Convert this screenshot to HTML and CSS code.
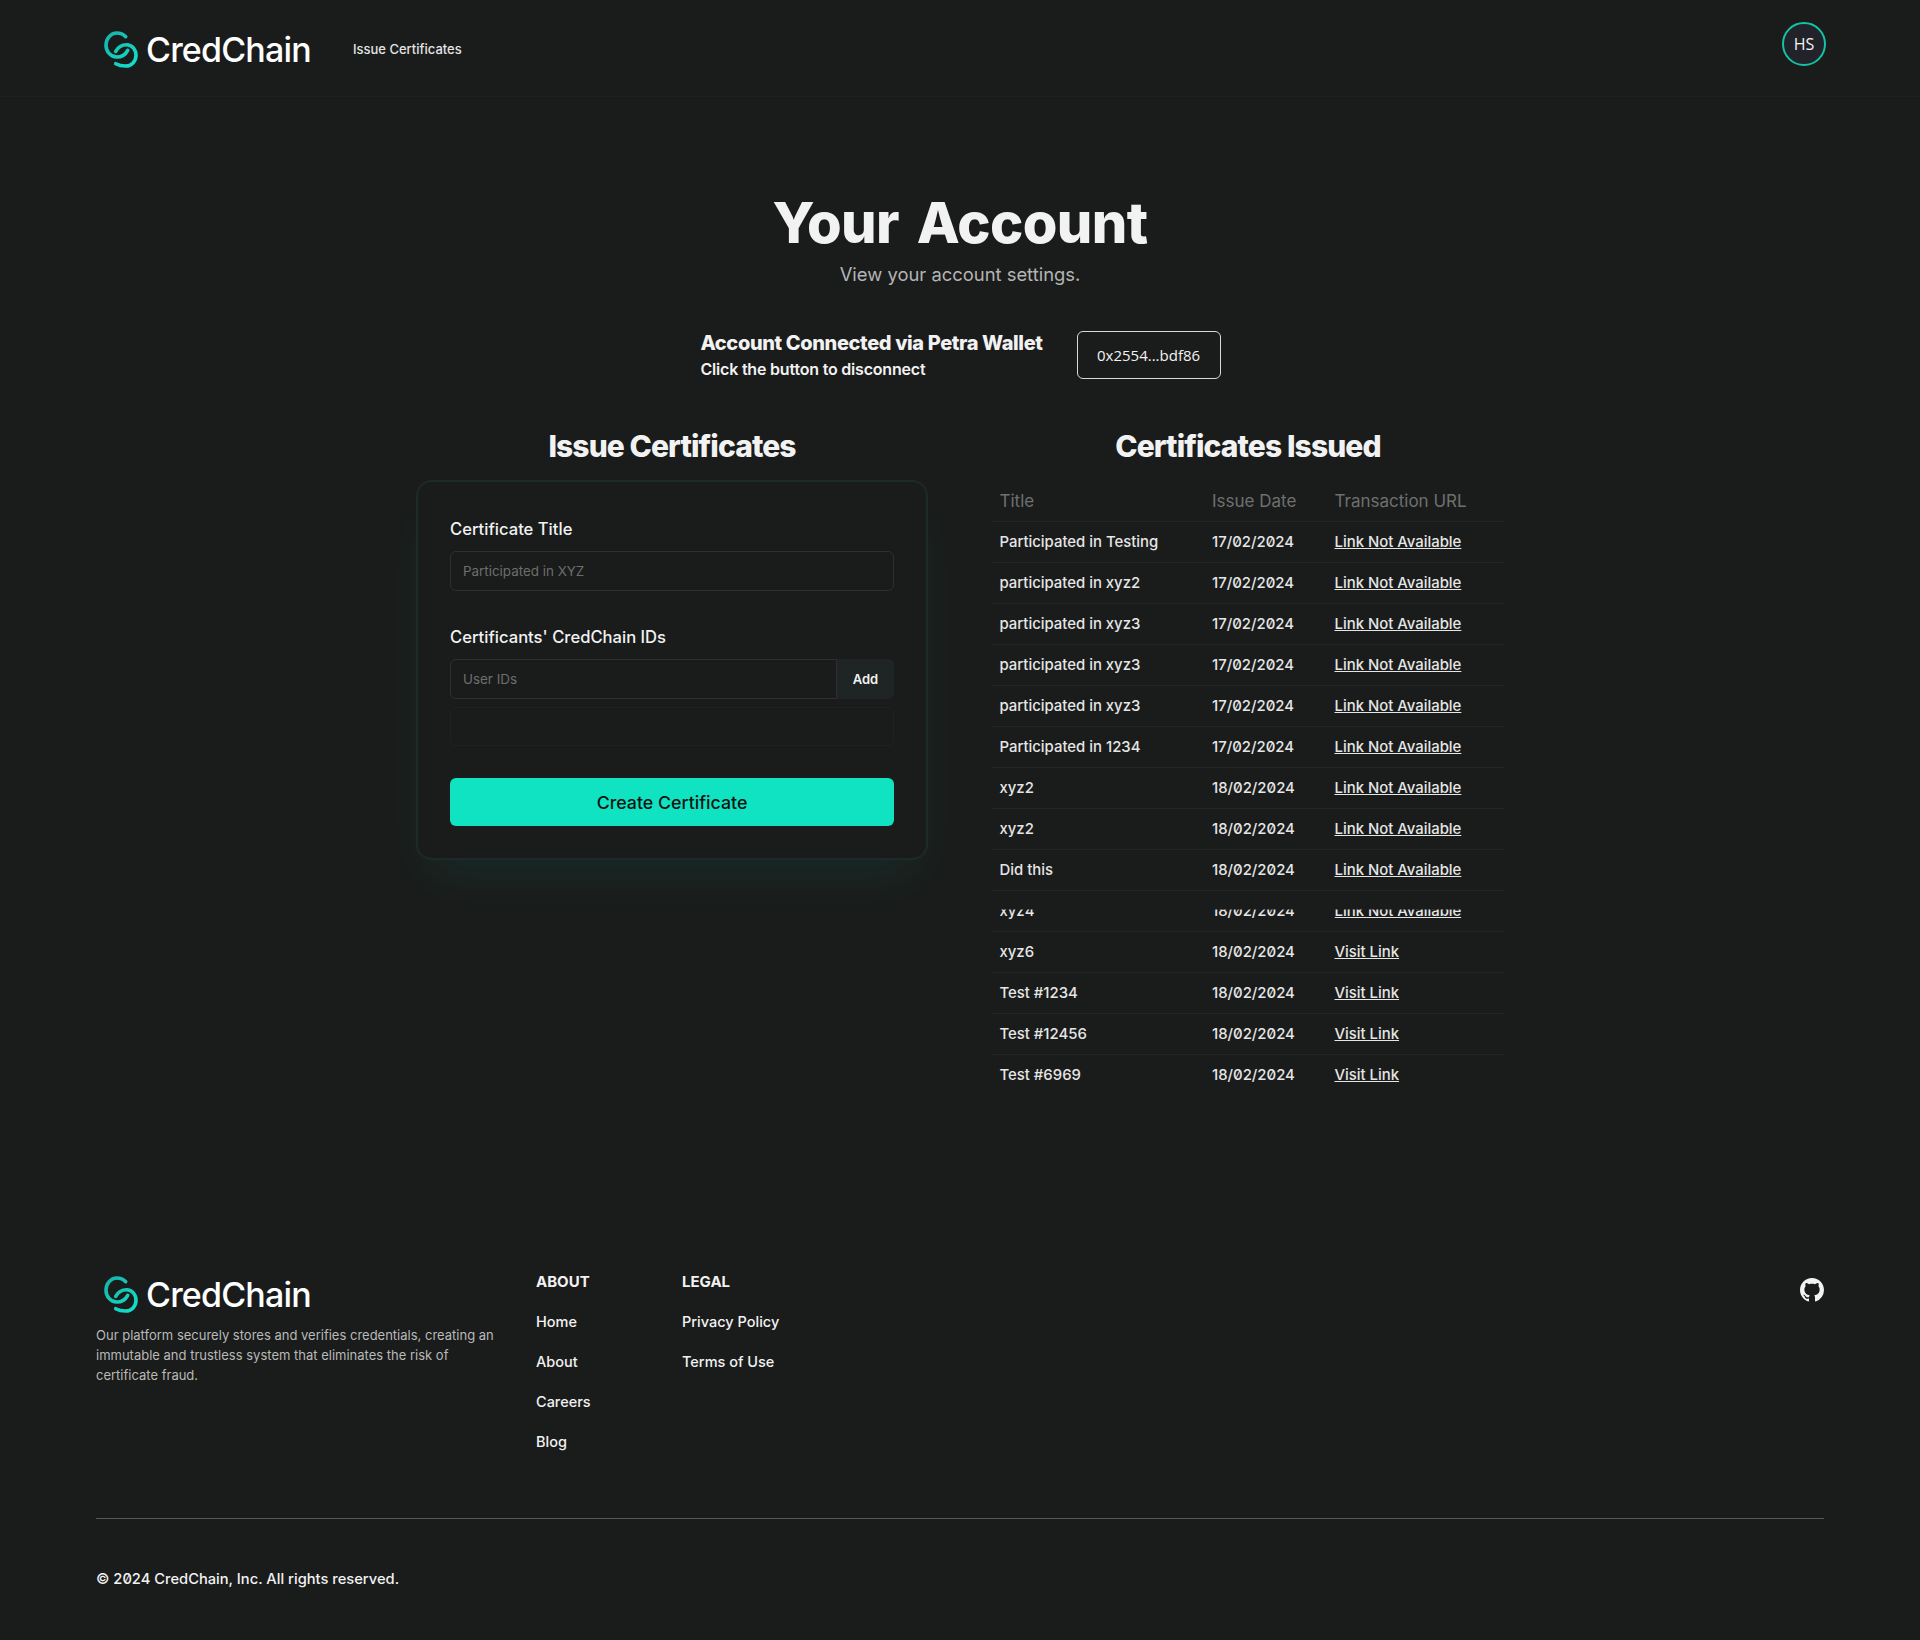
FILE: index.html
```html
<!DOCTYPE html>
<html lang="en">
<head>
    <meta charset="UTF-8" />
    <title>CredChain</title>
    <link rel="stylesheet" href="styles.css">
</head>

<body>
    <svg class="defs" width="0" height="0" aria-hidden="true">
        <defs>
            <linearGradient id="chainTeal" gradientUnits="userSpaceOnUse" x1="3" y1="4" x2="33" y2="35">
                <stop offset="0" stop-color="#17b5aa" />
                <stop offset="1" stop-color="#12dfcc" />
            </linearGradient>
            <g id="chainMark">
                <path d="M22.700 5.700C20.500 3.300 17 2 13.700 2C7.800 2 3 7.800 3 14C3 20.500 7.500 26 13.700 26C18 26 22.500 23.500 24.700 19.300" />
                <path d="M12.700 20.300C15 16 19 13.700 23.700 13.700C29 13.700 33 18.500 33 24.300C33 30.300 28.500 35 22.700 35C19 35 15.500 34.300 12.700 32.700" />
            </g>
        </defs>
    </svg>

    <header class="topbar">
        <a class="brand" href="#">
            <svg class="brand-mark" viewBox="0 0 36 38"><use href="#chainMark" /></svg>
            <span class="brand-name">CredChain</span>
        </a>
        <a class="nav-link" href="#">Issue Certificates</a>
        <button class="avatar">HS</button>
    </header>

    <main class="account">
        <h1>Your Account</h1>
        <p class="subtitle">View your account settings.</p>

        <section class="wallet">
            <div class="wallet-text">
                <h2>Account Connected via Petra Wallet</h2>
                <p>Click the button to disconnect</p>
            </div>
            <button class="wallet-btn">0x2554...bdf86</button>
        </section>

        <div class="columns">
            <section>
                <h3>Issue Certificates</h3>
                <form class="card">
                    <label for="certTitle">Certificate Title</label>
                    <input id="certTitle" type="text" placeholder="Participated in XYZ" />

                    <label class="second" for="userIds">Certificants' CredChain IDs</label>
                    <div class="id-row">
                        <input id="userIds" type="text" placeholder="User IDs" />
                        <button type="button" class="add-btn">Add</button>
                    </div>
                    <div class="id-list"></div>

                    <button type="button" class="create-btn">Create Certificate</button>
                </form>
            </section>

            <section>
                <h3>Certificates Issued</h3>
                <table class="issued">
                    <thead>
                        <tr><th>Title</th><th>Issue Date</th><th>Transaction URL</th></tr>
                    </thead>
                    <tbody>
                        <tr><td>Participated in Testing</td><td>17/02/2024</td><td><a href="#">Link Not Available</a></td></tr>
                        <tr><td>participated in xyz2</td><td>17/02/2024</td><td><a href="#">Link Not Available</a></td></tr>
                        <tr><td>participated in xyz3</td><td>17/02/2024</td><td><a href="#">Link Not Available</a></td></tr>
                        <tr><td>participated in xyz3</td><td>17/02/2024</td><td><a href="#">Link Not Available</a></td></tr>
                        <tr><td>participated in xyz3</td><td>17/02/2024</td><td><a href="#">Link Not Available</a></td></tr>
                        <tr><td>Participated in 1234</td><td>17/02/2024</td><td><a href="#">Link Not Available</a></td></tr>
                        <tr><td>xyz2</td><td>18/02/2024</td><td><a href="#">Link Not Available</a></td></tr>
                        <tr><td>xyz2</td><td>18/02/2024</td><td><a href="#">Link Not Available</a></td></tr>
                        <tr><td>Did this</td><td>18/02/2024</td><td><a href="#">Link Not Available</a></td></tr>
                        <tr class="cut"><td><span>xyz4</span></td><td><span>18/02/2024</span></td><td><span><a href="#">Link Not Available</a></span></td></tr>
                        <tr><td>xyz6</td><td>18/02/2024</td><td><a href="#">Visit Link</a></td></tr>
                        <tr><td>Test #1234</td><td>18/02/2024</td><td><a href="#">Visit Link</a></td></tr>
                        <tr><td>Test #12456</td><td>18/02/2024</td><td><a href="#">Visit Link</a></td></tr>
                        <tr><td>Test #6969</td><td>18/02/2024</td><td><a href="#">Visit Link</a></td></tr>
                    </tbody>
                </table>
            </section>
        </div>
    </main>

    <footer class="footer">
        <div class="footer-top">
            <div class="footer-about">
                <a class="brand" href="#">
                    <svg class="brand-mark" viewBox="0 0 36 38"><use href="#chainMark" /></svg>
                    <span class="brand-name">CredChain</span>
                </a>
                <p>Our platform securely stores and verifies credentials, creating an immutable and trustless system that eliminates the risk of certificate fraud.</p>
            </div>
            <nav class="footer-col about-col">
                <h4>ABOUT</h4>
                <a href="#">Home</a>
                <a href="#">About</a>
                <a href="#">Careers</a>
                <a href="#">Blog</a>
            </nav>
            <nav class="footer-col">
                <h4>LEGAL</h4>
                <a href="#">Privacy Policy</a>
                <a href="#">Terms of Use</a>
            </nav>
            <a class="github" href="#" aria-label="GitHub">
                <svg viewBox="0 0 16 16" width="24" height="24" fill="#f2f2f2">
                    <path d="M8 0C3.58 0 0 3.58 0 8c0 3.54 2.29 6.53 5.47 7.59.4.07.55-.17.55-.38 0-.19-.01-.82-.01-1.49-2.010.37-2.530-.49-2.690-.94-.09-.23-.48-.94-.82-1.130-.28-.15-.68-.52-.01-.53.63-.01 1.080.58 1.230.82.72 1.210 1.870.87 2.330.66.07-.52.28-.87.51-1.070-1.780-.2-3.640-.89-3.640-3.950 0-.87.31-1.590.82-2.150-.08-.2-.36-1.020.08-2.120 0 0 .67-.21 2.200.82.64-.18 1.320-.27 2-.27s1.360.09 2 .27c1.530-1.040 2.200-.82 2.200-.82.44 1.100.16 1.920.08 2.120.51.56.82 1.270.82 2.150 0 3.070-1.870 3.750-3.650 3.950.29.25.54.73.54 1.480 0 1.070-.01 1.930-.01 2.200 0 .21.15.46.55.38A8.010 8.010 0 0 0 16 8c0-4.420-3.580-8-8-8z" />
                </svg>
            </a>
        </div>
        <p class="copyright">© 2024 CredChain, Inc. All rights reserved.</p>
    </footer>
</body>

</html>
```

FILE: styles.css
```css
* {
    box-sizing: border-box;
}

html,
body {
    margin: 0;
    background: #1a1c1b;
}

body {
    font-family: Inter, 'Noto Sans', sans-serif;
    font-feature-settings: 'zero' 1;
    color: #f2f2f2;
}

a {
    color: inherit;
    text-decoration: none;
}

.defs {
    position: absolute;
}

.topbar {
    display: flex;
    align-items: flex-start;
    height: 97px;
    padding: 0 94px 0 96px;
    border-bottom: 1px solid #1f2120;
}

.brand {
    display: inline-flex;
    align-items: center;
    gap: 7px;
    padding-left: 7px;
}

.topbar .brand {
    margin-top: 29px;
}

.brand-mark {
    width: 36px;
    height: 38px;
    fill: none;
    stroke: url(#chainTeal);
    stroke-width: 3.600;
    stroke-linecap: round;
}

.brand-name {
    font-size: 34px;
    font-weight: 500;
    letter-spacing: -0.8px;
    color: #fff;
}

.nav-link {
    margin: 41px 0 0 42px;
    font-size: 13px;
    font-weight: 500;
    color: #e4e4e4;
}

.avatar {
    width: 44px;
    height: 44px;
    margin: 22px 0 0 auto;
    padding: 0;
    border: 2px solid #12c4a6;
    border-radius: 50%;
    background: #22232a;
    color: #f2f2f2;
    font-family: 'Open Sans', sans-serif;
    font-size: 16px;
}

.account {
    width: 1088px;
    margin: 0 auto;
    padding-top: 93px;
}

h1 {
    margin: 0;
    font-size: 56px;
    line-height: 66px;
    font-weight: 800;
    letter-spacing: -0.6px;
    text-align: center;
    word-spacing: 6px;
}

.subtitle {
    margin: 6px 0 0;
    font-size: 18.400px;
    line-height: 24px;
    font-weight: 400;
    text-align: center;
    color: #b4b4b4;
}

.wallet {
    display: flex;
    align-items: center;
    justify-content: center;
    gap: 33px;
    margin-top: 42px;
}

.wallet-text {
    margin-top: 2px;
    margin-left: 1px;
}

.wallet h2 {
    margin: 0;
    font-size: 20px;
    line-height: 26px;
    font-weight: 800;
    letter-spacing: -0.38px;
}

.wallet p {
    margin: 0;
    font-size: 16px;
    line-height: 26px;
    font-weight: 600;
    letter-spacing: -0.2px;
}

.wallet-btn {
    width: 144px;
    height: 48px;
    margin-left: 1px;
    border: 1px solid #d8d8d8;
    border-radius: 6px;
    background: transparent;
    color: #f2f2f2;
    font-family: 'Open Sans', sans-serif;
    font-size: 15px;
}

.columns {
    display: grid;
    grid-template-columns: 512px 512px;
    column-gap: 64px;
    margin-top: 45px;
}

h3 {
    margin: 0 0 15px;
    font-size: 30px;
    line-height: 38px;
    font-weight: 800;
    letter-spacing: -0.9px;
    text-align: center;
}

.card {
    display: flex;
    flex-direction: column;
    height: 380px;
    padding: 35px 32px 32px;
    border: 2px solid #1c2b29;
    border-radius: 16px;
    background: #1a1c1b;
    box-shadow: 0 25px 50px -12px rgba(15, 227, 194, 0.08);
}

label {
    margin-bottom: 10px;
    font-size: 16.600px;
    line-height: 24px;
    font-weight: 500;
}

label.second {
    margin-top: 34px;
}

input {
    height: 40px;
    padding: 0 12px;
    border: 1px solid #2e3030;
    border-radius: 6px;
    outline: none;
    background: transparent;
    color: #f2f2f2;
    font-family: inherit;
    font-size: 13.400px;
}

input::placeholder {
    color: #6c6e6d;
}

.id-row {
    display: flex;
}

.id-row input {
    flex: 1;
    border-radius: 6px 0 0 6px;
}

.add-btn {
    width: 57px;
    border: none;
    border-radius: 0 6px 6px 0;
    background: #1e2524;
    color: #f2f2f2;
    font-family: inherit;
    font-size: 13px;
    font-weight: 600;
}

.id-list {
    height: 40px;
    margin-top: 8px;
    border: 1px solid #202221;
    border-radius: 6px;
}

.create-btn {
    height: 48px;
    margin-top: 32px;
    border: none;
    border-radius: 6px;
    background: #0fe3c2;
    color: #101412;
    font-family: inherit;
    font-size: 17.800px;
    font-weight: 500;
}

.issued {
    width: 100%;
    border-collapse: collapse;
    table-layout: fixed;
}

.issued th,
.issued td {
    height: 41px;
    padding: 0 7.500px;
    border-bottom: 1px solid #242625;
    text-align: left;
    font-size: 14.900px;
    font-weight: 500;
    color: #e6e6e6;
}

.issued th {
    padding-top: 2px;
    font-size: 17px;
    font-weight: 400;
    color: #6e706f;
}

.issued th:nth-child(1) { width: 212.500px; }
.issued th:nth-child(2) { width: 122.500px; }

.issued tbody tr:last-child td {
    border-bottom: none;
}

.issued a {
    text-decoration: underline;
}

.cut span {
    display: inline-block;
    clip-path: inset(45% 0 0 0);
}

.footer {
    margin-top: 177px;
    padding: 0 96px;
}

.footer-top {
    display: flex;
    align-items: flex-start;
    height: 247px;
    border-bottom: 1px solid #575958;
}

.footer-about {
    width: 440px;
}

.footer-about .brand {
    margin-top: 2px;
}

.footer-about p {
    margin: 7px 0 0;
    width: 404px;
    font-size: 13px;
    line-height: 20px;
    color: #b9b9b9;
}

.footer-col {
    display: flex;
    flex-direction: column;
    gap: 20px;
    font-size: 14.500px;
    line-height: 20px;
    font-weight: 500;
}

.about-col {
    width: 146px;
}

.footer-col h4 {
    margin: 0;
    font-size: 15px;
    line-height: 20px;
    font-weight: 700;
}

.github {
    margin-left: auto;
    margin-top: 6px;
}

.copyright {
    margin: 50px 0 0;
    padding-bottom: 40px;
    font-size: 14.700px;
    line-height: 20px;
    font-weight: 500;
}
```
